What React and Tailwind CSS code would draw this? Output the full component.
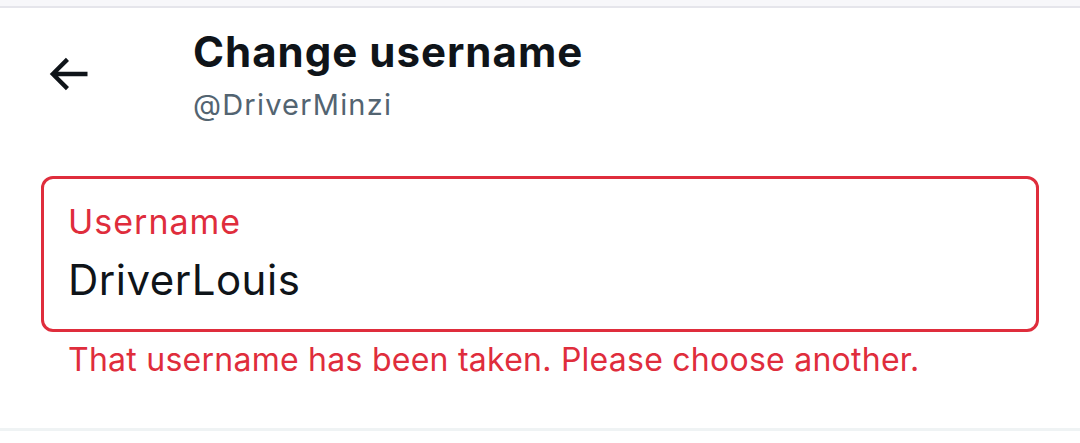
import React from 'react';

const BackArrow = () => (
    <svg width="52" height="52" viewBox="0 0 24 24" fill="#0f1419">
        <path d="M7.414 13l5.043 5.04-1.414 1.42L3.586 12l7.457-7.46 1.414 1.42L7.414 11H21v2H7.414z" />
    </svg>
);

const App = () => {
    return (
        <div className="w-[1080px] h-[443px] bg-white flex flex-col overflow-hidden font-['Inter','Liberation_Sans',sans-serif]">
            {/* top edge */}
            <div className="h-[6px] bg-[#f7f7fa]" />
            <div className="h-[2px] bg-[#e5e5eb]" />

            {/* header */}
            <div className="flex items-start">
                <div className="w-[193px] shrink-0 pl-[42px] pt-[40px]">
                    <BackArrow />
                </div>
                <div className="flex flex-col pt-[20px]">
                    <h1 className="text-[42px] leading-[48px] font-bold text-[#0f1419] tracking-[1px]">Change username</h1>
                    <p className="mt-[11px] text-[29px] leading-[36px] text-[#536471] tracking-[1.2px]">@DriverMinzi</p>
                </div>
            </div>

            {/* field */}
            <div className="px-[41px] mt-[53px]">
                <div className="h-[156px] border-[3px] border-[#df2d3c] rounded-[12px] pl-[24px] pt-[23px]">
                    <div className="text-[34px] leading-[40px] text-[#df2d3c] tracking-[1px]">Username</div>
                    <div className="mt-[13px] text-[42px] leading-[50px] text-[#0f1419] tracking-[0.5px]">DriverLouis</div>
                </div>
            </div>
            <p className="mt-[9px] pl-[68px] text-[32px] leading-[38px] text-[#df2d3c] tracking-[0.25px]">
                That username has been taken. Please choose another.
            </p>

            <div className="mt-[49px] h-[3px] bg-[#eff3f4]" />
            <div className="flex-1 bg-white" />
        </div>
    );
};

export default App;
